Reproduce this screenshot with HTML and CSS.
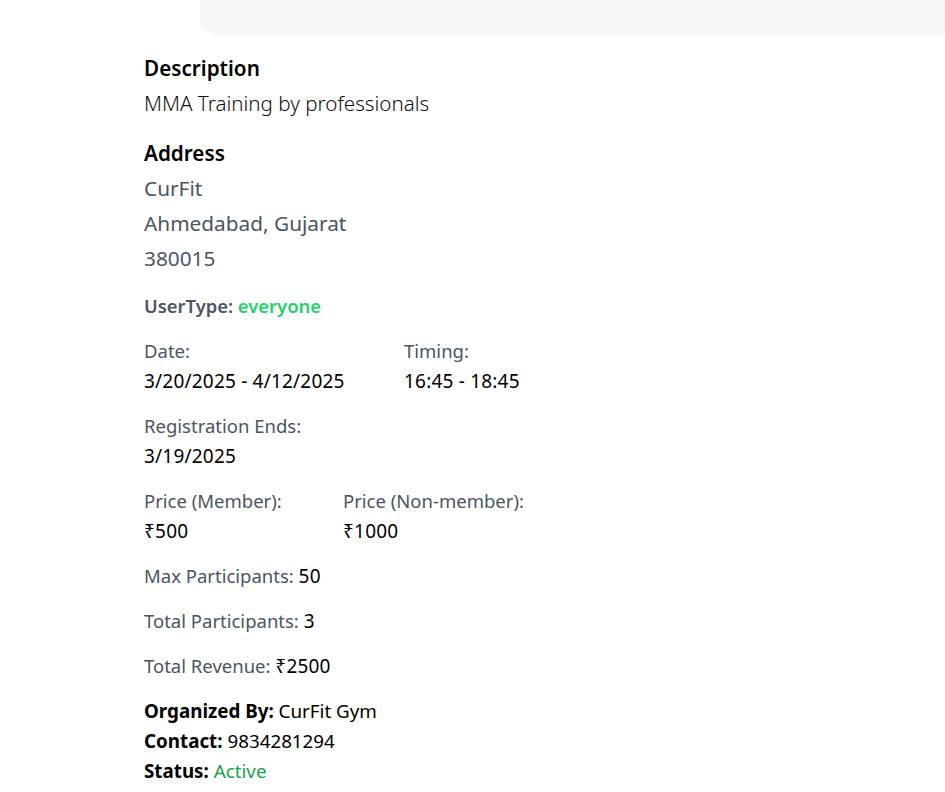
FILE: index.html
```html
<!DOCTYPE html>
<html>
<head>
<meta charset="utf-8">
<link rel="stylesheet" href="styles.css">
</head>
<body>
<div class="topcard"></div>
<main class="details">
  <section class="block">
    <h3 class="heading">Description</h3>
    <p class="desc">MMA Training by professionals</p>
  </section>
  <section class="block address-block">
    <h3 class="heading">Address</h3>
    <p class="addr">CurFit</p>
    <p class="addr">Ahmedabad, Gujarat</p>
    <p class="addr">380015</p>
  </section>
  <p class="usertype">UserType: <span class="green-bright">everyone</span></p>
  <div class="facts">
    <div class="pair">
      <div class="col col-date">
        <div class="label">Date:</div>
        <div class="value">3/20/2025 - 4/12/2025</div>
      </div>
      <div class="col">
        <div class="label">Timing:</div>
        <div class="value">16:45 - 18:45</div>
      </div>
    </div>
    <div class="col">
      <div class="label">Registration Ends:</div>
      <div class="value">3/19/2025</div>
    </div>
    <div class="pair">
      <div class="col col-price">
        <div class="label">Price (Member):</div>
        <div class="value">₹500</div>
      </div>
      <div class="col">
        <div class="label">Price (Non-member):</div>
        <div class="value">₹1000</div>
      </div>
    </div>
    <div class="line"><span class="label">Max Participants:</span> <span class="value">50</span></div>
    <div class="line"><span class="label">Total Participants:</span> <span class="value">3</span></div>
    <div class="line"><span class="label">Total Revenue:</span> <span class="value">₹2500</span></div>
    <div class="org">
      <div class="line"><strong>Organized By:</strong> CurFit Gym</div>
      <div class="line"><strong>Contact:</strong> 9834281294</div>
      <div class="line"><strong>Status:</strong> <span class="green">Active</span></div>
    </div>
  </div>
</main>
</body>
</html>
```
FILE: styles.css
```css
* { box-sizing: border-box; }
html, body { margin: 0; padding: 0; background: #fff; }
body {
  font-family: "Noto Sans", "Open Sans", sans-serif;
  color: #000;
  width: 945px;
  height: 792px;
  overflow: hidden;
}
.topcard {
  margin-left: 200px;
  height: 35px;
  background: #f7f7f7;
  border-bottom-left-radius: 16px;
}
.details {
  padding-left: 144px;
  padding-top: 19px;
}
h3, p { margin: 0; }
.heading {
  font-size: 20.7px;
  font-weight: 600;
  line-height: 28px;
  color: #000;
}
.desc {
  margin-top: 7px;
  font-size: 20.6px;
  font-weight: 300;
  line-height: 28px;
  color: #111;
}
.address-block { margin-top: 22px; }
.address-block .heading { margin-bottom: 4px; }
.addr {
  font-size: 20.8px;
  line-height: 35px;
  color: #4b5563;
}
.usertype {
  margin-top: 16px;
  font-size: 18.4px;
  font-weight: 600;
  line-height: 28px;
  color: #4b5563;
}
.green-bright { color: #22d36b; }
.green { color: #16a34a; }
.facts {
  margin-top: 16px;
  display: flex;
  flex-direction: column;
  gap: 15px;
  font-size: 18.5px;
  line-height: 30px;
}
.pair { display: flex; }
.col-date { width: 260px; }
.col-price { width: 199px; }
.label { color: #4b5563; }
.value { color: #000; font-size: 19px; letter-spacing: 0.2px; }
.org { display: flex; flex-direction: column; font-size: 18.8px; }
.org strong { font-weight: 700; }
```
